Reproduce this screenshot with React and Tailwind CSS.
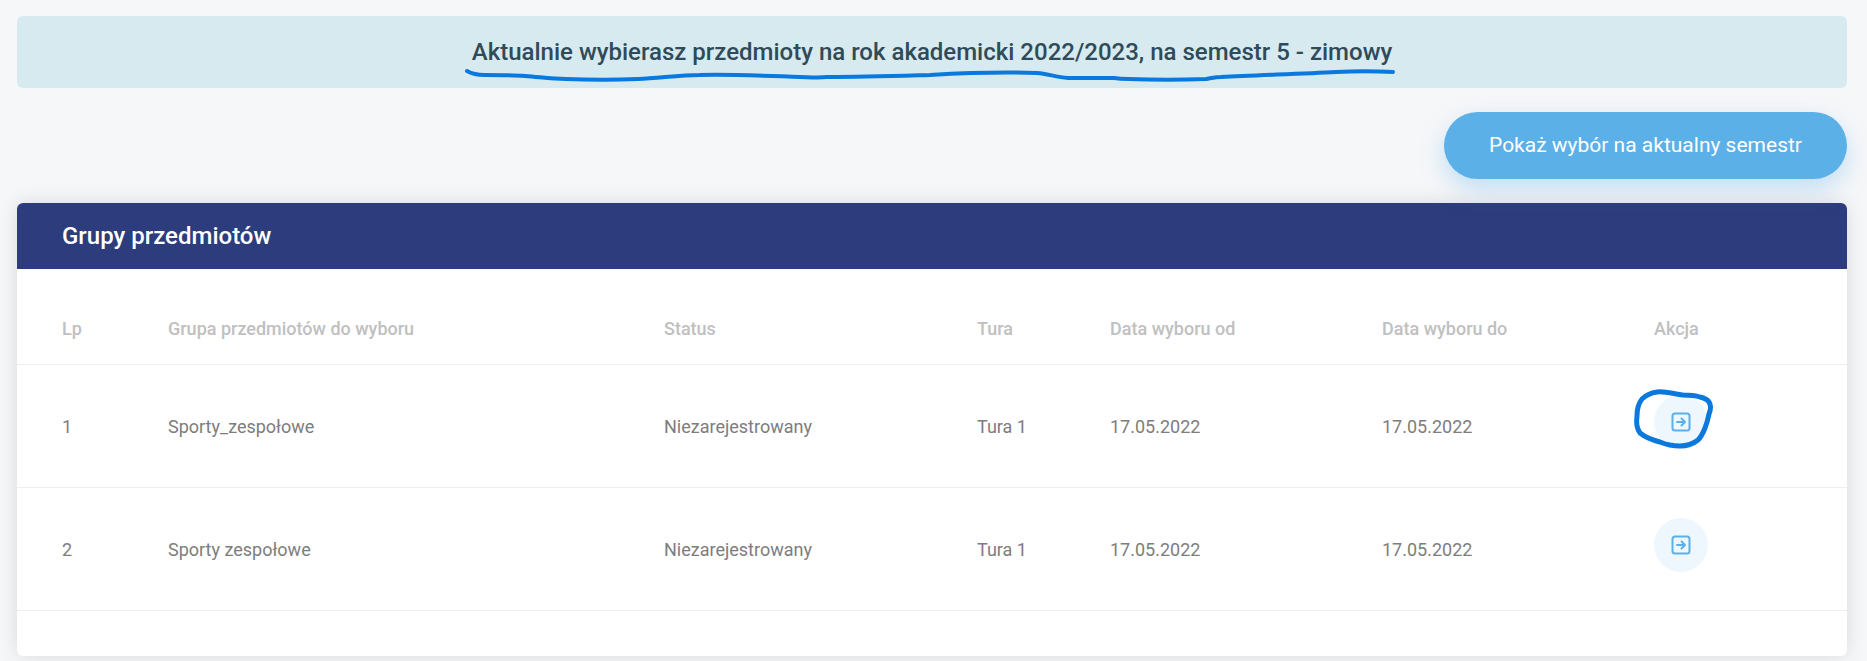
const rows = [
  { lp: 1, name: "Sporty_zespołowe" },
  { lp: 2, name: "Sporty zespołowe" },
];

const gridCols = "grid grid-cols-[106px_496px_313px_133px_272px_272px_54px] items-center px-[45px]";

const GoIcon = () => (
  <svg width="20" height="20" viewBox="0 0 20 20" fill="none" stroke="#5cb0e8" strokeWidth="2" strokeLinecap="round" strokeLinejoin="round">
    <rect x="1.5" y="1.5" width="17" height="17" rx="2.5" />
    <path d="M6 10h8M10.5 6.5 14 10l-3.5 3.5" />
  </svg>
);

// hand drawn marks that sit on top of the screenshot
const Annotations = () => (
  <svg className="pointer-events-none absolute left-0 top-0" width="1867" height="661" fill="none" stroke="#0a78dc" strokeLinecap="round" strokeLinejoin="round">
    <path
      strokeWidth="4"
      d="M467 71C472 74 478 75 485 75C500 75 512 75 525 76C540 77 550 79 566 79C590 80 615 80 638 79C660 78 680 75 699 75C730 74 770 76 800 77C815 78 822 77 827 77C865 77 895 76 930 75C965 73 1005 72 1037 73C1048 74 1056 77 1068 78C1085 78 1100 78 1114 78C1120 79 1124 79 1129 79C1155 80 1180 80 1206 79C1212 78 1216 77 1221 77C1260 75 1300 74 1336 72C1355 71 1375 71 1393 72"
    />
    <path
      strokeWidth="5"
      d="M1657 392C1650 393 1645 396 1642 399C1638 404 1637 410 1637 416C1636 423 1637 429 1640 433C1645 437 1652 440 1660 442C1667 445 1674 446 1680 446C1687 446 1693 444 1698 440C1701 437 1703 433 1705 428C1707 423 1708 419 1709 414C1711 409 1711 405 1709 402C1707 399 1704 398 1700 397C1694 395 1688 395 1683 395C1674 394 1665 391 1657 392Z"
    />
  </svg>
);

const App = () => {
  return (
    <div className="relative h-[661px] overflow-hidden bg-[#f6f7f9] pl-[17px] pr-[20px] pt-4 font-['Roboto',sans-serif]">
      <div className="flex h-[72px] items-center justify-center rounded-md bg-[#d7eaf0] text-[24px] font-medium text-[#2f4b59]">
        Aktualnie wybierasz przedmioty na rok akademicki 2022/2023, na semestr 5 - zimowy
      </div>

      <div className="mt-6 flex justify-end">
        <button className="h-[67px] w-[403px] rounded-[34px] bg-[#5cb0e8] text-[21px] text-white shadow-[0_10px_25px_rgba(92,176,232,0.35)]">
          Pokaż wybór na aktualny semestr
        </button>
      </div>

      <div className="mt-6 h-[453px] rounded-md bg-white shadow-[0_0_20px_rgba(0,0,0,0.12)]">
        <div className="flex h-[66px] items-center rounded-t-md bg-[#2d3c7c] px-[45px] text-[24px] font-medium text-white">
          Grupy przedmiotów
        </div>

        <div className={`${gridCols} h-[96px] border-b border-[#eeeef5] pt-[23px] text-[18px] font-medium text-[#c0c0c0]`}>
          <div>Lp</div>
          <div>Grupa przedmiotów do wyboru</div>
          <div>Status</div>
          <div>Tura</div>
          <div>Data wyboru od</div>
          <div>Data wyboru do</div>
          <div className="whitespace-nowrap pr-[10px] text-center">Akcja</div>
        </div>

        {rows.map((row) => (
          <div key={row.lp} className={`${gridCols} h-[123px] border-b border-[#eeeef5] text-[18px] text-[#7d7d7d]`}>
            <div>{row.lp}</div>
            <div>{row.name}</div>
            <div>Niezarejestrowany</div>
            <div>Tura 1</div>
            <div>17.05.2022</div>
            <div>17.05.2022</div>
            <button className="-mt-[8px] flex h-[54px] w-[54px] items-center justify-center rounded-full bg-[#eef7fd]">
              <GoIcon />
            </button>
          </div>
        ))}
      </div>

      <Annotations />
    </div>
  );
};

export default App;
